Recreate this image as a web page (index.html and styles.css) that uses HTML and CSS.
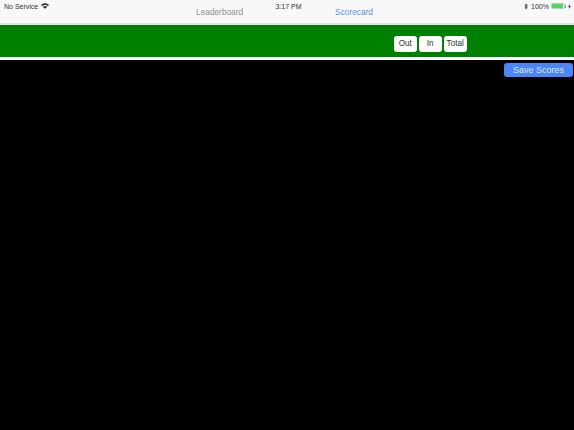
FILE: index.html
```html
<!DOCTYPE html>
<html lang="en">
<head>
    <meta charset="UTF-8">
    <meta name="viewport" content="width=device-width, initial-scale=1.0">
    <title>Scorecard</title>
    <link rel="stylesheet" href="styles.css">
</head>
<body>
    <div class="nav-bar">
        <div class="status-bar">
            <div class="status-left">
                <span>No Service</span>
                <svg class="wifi" viewBox="0 0 10 7" width="8" height="6">
                    <path d="M0 2.400C2.800-.6 7.200-.6 10 2.400L8.600 3.800C6.600 1.800 3.400 1.800 1.400 3.800Z" fill="#333"/>
                    <path d="M2.300 4.600C3.800 3.200 6.200 3.200 7.700 4.600L5 7Z" fill="#333"/>
                </svg>
            </div>
            <div class="status-time">3:17 PM</div>
            <div class="status-right">
                <svg class="bluetooth" viewBox="0 0 6 10" width="4" height="7">
                    <path d="M1 2.500L5 6.800L3 9V1L5 3.200L1 7.500" fill="none" stroke="#333" stroke-width="1.200"/>
                </svg>
                <span>100%</span>
                <div class="battery"><div class="battery-fill"></div></div>
                <div class="battery-cap"></div>
                <svg class="charging" viewBox="0 0 4 7" width="3" height="5">
                    <path d="M2.500 0L0 4H1.600L1.200 7L4 3H2.300Z" fill="#333"/>
                </svg>
            </div>
        </div>
        <div class="tabs">
            <a class="tab">Leaderboard</a>
            <a class="tab active">Scorecard</a>
        </div>
    </div>

    <div class="score-header">
        <button class="total-btn">Out</button>
        <button class="total-btn">In</button>
        <button class="total-btn">Total</button>
    </div>

    <div class="content">
        <button class="save-btn">Save Scores</button>
    </div>
</body>
</html>
```

FILE: styles.css
```css
* {
    margin: 0;
    padding: 0;
    box-sizing: border-box;
    font-family: 'Liberation Sans', Arial, sans-serif;
}

html, body {
    height: 100%;
    overflow: hidden;
}

body {
    display: flex;
    flex-direction: column;
    background-color: #fff;
}

.nav-bar {
    position: relative;
    height: 25px;
    background-color: #f8f8f8;
    border-bottom: 2px solid #e4e4e4;
}

.status-bar {
    position: absolute;
    top: 0;
    left: 0;
    width: 100%;
    height: 12px;
    padding: 0 3px 0 4px;
    display: flex;
    align-items: center;
    justify-content: space-between;
    font-size: 7px;
    color: #333;
}

.status-left, .status-right {
    display: flex;
    align-items: center;
    width: 120px;
}

.status-left {
    gap: 3px;
}

.status-right {
    justify-content: flex-end;
    gap: 2px;
}

.status-time {
    font-size: 7px;
    margin-left: 2px;
}

.bluetooth {
    margin-right: 1px;
}

.battery {
    width: 14px;
    height: 6px;
    border: 0.500px solid #c4c4c4;
    border-radius: 1.500px;
}

.battery-fill {
    width: 11px;
    height: 100%;
    background-color: #4cd964;
}

.battery-cap {
    width: 1px;
    height: 3px;
    margin-left: -2px;
    background-color: #999;
}

.tabs {
    display: flex;
    justify-content: center;
    gap: 92px;
    padding-top: 7px;
    padding-right: 5px;
}

.tab {
    font-size: 8.300px;
    line-height: 10px;
    color: #8e8e93;
}

.tab.active {
    color: #5b8fdc;
}

.score-header {
    height: 32px;
    background-color: #008000;
    display: flex;
    align-items: center;
    gap: 1.500px;
    padding-left: 393.500px;
    padding-top: 6px;
}

.total-btn {
    width: 23.500px;
    height: 16px;
    padding-bottom: 2px;
    background-color: #fff;
    border: none;
    border-radius: 3px;
    font-size: 8.200px;
    color: #333;
}

.content {
    flex: 1;
    margin-top: 3px;
    background-color: #000;
    display: flex;
    justify-content: flex-end;
    align-items: flex-start;
    padding: 3px 1px 0 0;
}

.save-btn {
    width: 69px;
    height: 14px;
    padding-bottom: 1px;
    background-color: #4a86f7;
    color: #dce7fb;
    border: none;
    border-radius: 3px;
    font-size: 9px;
}
```
